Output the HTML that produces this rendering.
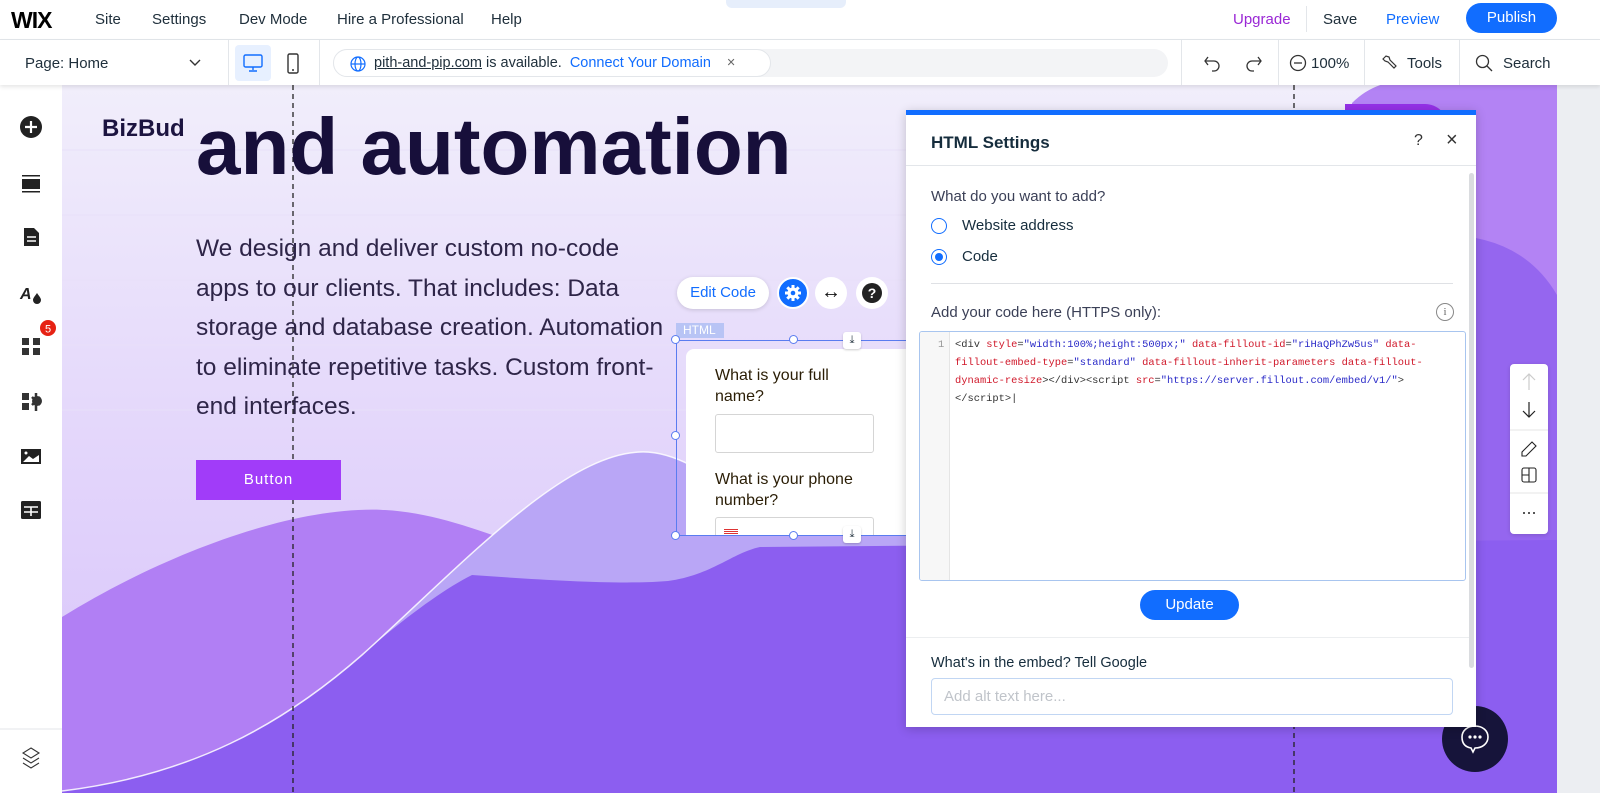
<!DOCTYPE html>
<html><head><meta charset="utf-8"><style>
*{box-sizing:border-box;margin:0;padding:0}
body{width:1600px;height:793px;overflow:hidden;font-family:"Liberation Sans",sans-serif;background:#eceef2;position:relative;color:#20303c}
.abs{position:absolute}
#top{left:0;top:0;width:1600px;height:40px;background:#fff;border-bottom:1px solid #e3e6ea}
#top span{position:absolute;top:11px;font-size:15px;color:#20303c}
#bar2{left:0;top:40px;width:1600px;height:45px;background:#fff;box-shadow:0 2px 4px rgba(0,0,0,.1);z-index:5}
#bar2 .sep{position:absolute;top:0;width:1px;height:45px;background:#e3e6ea}
#side{left:0;top:85px;width:62px;height:708px;background:#fff;z-index:4}
#canvas{left:62px;top:85px;width:1495px;height:708px;overflow:hidden;background:linear-gradient(#f1eefb,#e1d2fb 60%,#d6c2fa)}
.mono{font-family:"Liberation Mono",monospace;font-size:10.4px;line-height:18px;white-space:pre}
.r{color:#d0182a}.b{color:#2a2ac8}.k{color:#333}
</style></head><body>
<div id="top" class="abs">
 <span style="left:11px;top:7px;font-size:23px;font-weight:bold;letter-spacing:-1px;color:#000">WIX</span>
 <span style="left:95px">Site</span><span style="left:152px">Settings</span><span style="left:239px">Dev Mode</span><span style="left:337px">Hire a Professional</span><span style="left:491px">Help</span>
 <div class="abs" style="left:726px;top:0;width:120px;height:8px;background:#e6eefb;border-radius:0 0 6px 6px"></div>
 <span style="left:1233px;color:#9a27d5">Upgrade</span>
 <div class="abs" style="left:1306px;top:6px;width:1px;height:26px;background:#e3e6ea"></div>
 <span style="left:1323px">Save</span><span style="left:1386px;color:#116dff">Preview</span>
 <div class="abs" style="left:1466px;top:3px;width:91px;height:30px;border-radius:15px;background:#116dff;color:#fff;font-size:15px;text-align:center;line-height:30px">Publish</div>
</div>
<div id="bar2" class="abs">
 <div class="abs" style="left:25px;top:15px;font-size:15px">Page: Home</div>
 <svg class="abs" style="left:189px;top:19px" width="12" height="8"><path d="M1 1l5 5 5-5" stroke="#333" fill="none" stroke-width="1.4"/></svg>
 <div class="sep" style="left:228px"></div>
 <div class="abs" style="left:235px;top:5px;width:36px;height:36px;background:#e7f0ff;border-radius:4px"></div>
 <svg class="abs" style="left:242px;top:13px" width="22" height="20"><rect x="2" y="2" width="18" height="12" rx="1.5" stroke="#116dff" fill="none" stroke-width="1.4"/><path d="M11 14v3M7 18h8" stroke="#116dff" stroke-width="1.4"/></svg>
 <svg class="abs" style="left:286px;top:13px" width="14" height="22"><rect x="2" y="1" width="10" height="19" rx="1.5" stroke="#333" fill="none" stroke-width="1.4"/><circle cx="7" cy="17" r="1" fill="#333"/></svg>
 <div class="sep" style="left:319px"></div>
 <div class="abs" style="left:333px;top:9px;width:835px;height:28px;border-radius:14px;background:#f3f4f6"></div>
 <div class="abs" style="left:333px;top:9px;width:438px;height:28px;border-radius:14px;background:#fff;border:1px solid #e3e6ea;font-size:14.5px;line-height:26px;padding-left:40px;color:#20303c"><span style="text-decoration:underline">pith-and-pip.com</span> is available. <span style="color:#116dff;margin-left:4px">Connect Your Domain</span><span style="color:#666;margin-left:16px">×</span></div>
 <svg class="abs" style="left:350px;top:16px" width="16" height="16"><circle cx="8" cy="8" r="7" stroke="#116dff" fill="none" stroke-width="1.2"/><ellipse cx="8" cy="8" rx="3" ry="7" stroke="#116dff" fill="none" stroke-width="1.2"/><path d="M1 8h14" stroke="#116dff" stroke-width="1.2"/></svg>
 <div class="sep" style="left:1181px"></div>
 <svg class="abs" style="left:1203px;top:13px" width="60" height="20"><path d="M5 4L2 8l3 4M2 8h9a5 5 0 0 1 0 10H9" stroke="#333" fill="none" stroke-width="1.3"/><path d="M55 4l3 4-3 4M58 8h-9a5 5 0 0 0 0 10h2" stroke="#333" fill="none" stroke-width="1.3"/></svg>
 <div class="sep" style="left:1278px"></div>
 <svg class="abs" style="left:1289px;top:14px" width="18" height="18"><circle cx="9" cy="9" r="7.5" stroke="#333" fill="none" stroke-width="1.3"/><path d="M5 9h8" stroke="#333" stroke-width="1.3"/></svg>
 <div class="abs" style="left:1311px;top:15px;font-size:15px">100%</div>
 <div class="sep" style="left:1364px"></div>
 <svg class="abs" style="left:1380px;top:13px" width="18" height="18"><path d="M3 6l3-3 3 1 1 3 6 6-2 2-6-6-3-1z" stroke="#333" fill="none" stroke-width="1.2"/></svg>
 <div class="abs" style="left:1407px;top:15px;font-size:15px">Tools</div>
 <div class="sep" style="left:1459px"></div>
 <svg class="abs" style="left:1475px;top:14px" width="18" height="18"><circle cx="7.5" cy="7.5" r="6" stroke="#333" fill="none" stroke-width="1.3"/><path d="M12 12l5 5" stroke="#333" stroke-width="1.3"/></svg>
 <div class="abs" style="left:1503px;top:15px;font-size:15px">Search</div>
</div>
<div id="side" class="abs">
 <svg width="62" height="708" class="abs" style="left:0;top:0">
  <circle cx="31" cy="42" r="11" fill="#222"/><path d="M31 36v12M25 42h12" stroke="#fff" stroke-width="2.2"/>
  <rect x="22" y="94" width="18" height="10" fill="#222"/><rect x="22" y="90" width="18" height="1.5" fill="#222"/><rect x="22" y="106" width="18" height="1.5" fill="#222"/>
  <path d="M24 143h10l5 5v13h-15z" fill="#222"/><path d="M27 152h9M27 156h9" stroke="#fff" stroke-width="1.5"/>
  <text x="20" y="214" font-family="Liberation Sans" font-weight="bold" font-style="italic" font-size="16" fill="#222">A</text><path d="M37 208c-2 3-4 5-4 7a4 4 0 0 0 8 0c0-2-2-4-4-7z" fill="#222"/>
  <rect x="22" y="253" width="7" height="7" fill="#333"/><rect x="33" y="253" width="7" height="7" fill="#333"/><rect x="22" y="263" width="7" height="7" fill="#333"/><rect x="33" y="263" width="7" height="7" fill="#333"/>
  <circle cx="48" cy="243" r="8" fill="#e62214"/><text x="48" y="247.5" text-anchor="middle" font-family="Liberation Sans" font-size="11" fill="#fff">5</text>
  <rect x="22" y="308" width="7" height="7" fill="#333"/><rect x="22" y="318" width="7" height="7" fill="#333"/><circle cx="37" cy="316" r="5" fill="#333"/><path d="M36 308v18M32 312l8 8M40 312l-8 8" stroke="#333" stroke-width="2.5"/>
  <rect x="21" y="364" width="20" height="15" fill="#222"/><path d="M23 377l6-6 4 3 6-4v7z" fill="#fff"/><circle cx="26" cy="368" r="1.5" fill="#fff"/>
  <rect x="21" y="416" width="20" height="18" rx="1.5" fill="#222"/><path d="M24 422h14M31 422v9M24 427h14" stroke="#fff" stroke-width="1.6"/>
  <path d="M0 644h62" stroke="#e3e6ea"/>
  <path d="M31 663l8 5-8 5-8-5zM23 673l8 5 8-5M23 678l8 5 8-5" stroke="#333" fill="none" stroke-width="1.1"/>
 </svg>
</div>
<div id="canvas" class="abs">
 <svg class="abs" style="left:0;top:0" width="1495" height="708">
  <g stroke="#e8e0f8" stroke-width="1"><path d="M0 65h1495M0 130h1495M0 195h1495M0 260h1495M0 325h1495"/></g>
  <path d="M1290 18 q30-30 80-20 L1495 -5 V708 H1290 Z" fill="#b383f4"/>
  <path d="M1380 150 q80 0 115 60 V708 H1380Z" fill="#9566ef"/>
  <path d="M1283 19 h80 a23 23 0 0 1 0 46 h-80z" fill="#9530e8"/>
  <path d="M0 532 C100 470 230 420 323 425 C420 430 520 500 606 496 C660 490 700 460 760 455 L1290 440 V708 H0Z" fill="#b17ff4"/>
  <path d="M0 706 C130 690 220 640 300 570 C400 480 500 370 578 367 C620 365 660 400 720 440 L1290 440 V708Z" fill="#b9a6f6"/>
  <path d="M0 708 L0 706 C130 690 220 640 300 570 C340 535 380 505 410 490 C480 495 560 500 606 496 C650 490 670 468 698 462 L1495 455 V708Z" fill="#8c5ef0"/>
  <path d="M0 706 C130 690 220 640 300 570 C400 480 500 370 578 367 C620 365 660 400 720 440" stroke="#fff" stroke-width="1.5" fill="none" opacity=".85"/>
  <path d="M231 0v708M1232 0v708" stroke="#222" stroke-width="1.3" stroke-dasharray="5 4"/>
 </svg>
 <div class="abs" style="left:40px;top:30px;font-size:24px;font-weight:bold;color:#1c1440">BizBud</div>
 <div class="abs" style="left:134px;top:17px;font-size:80px;font-weight:bold;color:#170f3a;line-height:90px;white-space:nowrap">and automation</div>
 <div class="abs" style="left:134px;top:144px;font-size:24.5px;line-height:39.5px;color:#2e2548;white-space:nowrap">We design and deliver custom no-code<br>apps to our clients. That includes: Data<br>storage and database creation. Automation<br>to eliminate repetitive tasks. Custom front-<br>end interfaces.</div>
 <div class="abs" style="left:134px;top:375px;width:145px;height:40px;background:#a13cf9;color:#fff;font-size:15px;text-align:center;line-height:40px;letter-spacing:1px">Button</div>
 <div class="abs" style="left:615px;top:192px;width:92px;height:32px;background:#fff;border-radius:16px;color:#116dff;font-size:15px;text-align:center;line-height:32px;box-shadow:0 1px 4px rgba(0,0,0,.15)">Edit Code</div>
 <div class="abs" style="left:715px;top:192px;width:32px;height:32px;border-radius:50%;background:#116dff;border:2px solid #fff"></div>
 <svg class="abs" style="left:722px;top:199px" width="18" height="18"><circle cx="9" cy="9" r="5.5" fill="#fff"/><path d="M9 1v16M1 9h16M3.3 3.3l11.4 11.4M14.7 3.3L3.3 14.7" stroke="#fff" stroke-width="3"/><circle cx="9" cy="9" r="2.3" fill="#116dff"/></svg>
 <div class="abs" style="left:753px;top:192px;width:32px;height:32px;border-radius:50%;background:#fff;font-size:20px;text-align:center;line-height:30px;color:#111">↔</div>
 <div class="abs" style="left:794px;top:192px;width:32px;height:32px;border-radius:50%;background:#fff"></div>
 <div class="abs" style="left:800px;top:198px;width:20px;height:20px;border-radius:50%;background:#222;color:#fff;font-weight:bold;font-size:14px;text-align:center;line-height:20px">?</div>
 <div class="abs" style="left:614px;top:238px;width:48px;height:15px;background:#b8c4f5;color:#fff;font-size:12px;padding-left:7px;line-height:15px">HTML</div>
 <div class="abs" style="left:624px;top:264px;width:220px;height:186px;background:#fff;border-radius:8px 0 0 0"></div>
 <div class="abs" style="left:653px;top:280px;font-size:16px;line-height:21px;color:#2a1d05;width:140px">What is your full name?</div>
 <div class="abs" style="left:653px;top:329px;width:159px;height:39px;border:1px solid #d5d5d5;border-radius:3px"></div>
 <div class="abs" style="left:653px;top:384px;font-size:16px;line-height:21px;color:#2a1d05;width:160px">What is your phone number?</div>
 <div class="abs" style="left:653px;top:432px;width:159px;height:18px;border:1px solid #d5d5d5;border-bottom:none;border-radius:3px 3px 0 0"></div>
 <div class="abs" style="left:662px;top:444px;width:14px;height:6px;background:repeating-linear-gradient(#d33 0 1px,#fff 1px 2px)"></div>
 <div class="abs" style="left:614px;top:255px;width:230px;height:196px;border:1px solid #5a7cf0;border-right:none"></div>
 <div class="abs" style="left:609px;top:346px;width:9px;height:9px;border-radius:50%;background:#fff;border:1px solid #5a7cf0"></div>
 <div class="abs" style="left:609px;top:250px;width:9px;height:9px;border-radius:50%;background:#fff;border:1px solid #5a7cf0"></div>
 <div class="abs" style="left:609px;top:446px;width:9px;height:9px;border-radius:50%;background:#fff;border:1px solid #5a7cf0"></div>
 <div class="abs" style="left:727px;top:250px;width:9px;height:9px;border-radius:50%;background:#fff;border:1px solid #5a7cf0"></div>
 <div class="abs" style="left:727px;top:446px;width:9px;height:9px;border-radius:50%;background:#fff;border:1px solid #5a7cf0"></div>
 <div class="abs" style="left:781px;top:247px;width:18px;height:17px;background:#fff;border-radius:3px;font-size:11px;text-align:center;line-height:16px;box-shadow:0 1px 2px rgba(0,0,0,.2)">⤓</div>
 <div class="abs" style="left:781px;top:441px;width:18px;height:17px;background:#fff;border-radius:3px;font-size:11px;text-align:center;line-height:16px;box-shadow:0 1px 2px rgba(0,0,0,.2)">⤓</div>
 <div class="abs" style="left:1448px;top:279px;width:38px;height:170px;background:#fff;border-radius:4px;box-shadow:0 1px 4px rgba(0,0,0,.15)">
  <svg width="38" height="170"><path d="M19 10v16M13 16l6-6 6 6" stroke="#ccc" fill="none" stroke-width="1.2"/><path d="M19 38v15M13 47l6 6 6-6" stroke="#222" fill="none" stroke-width="1.2"/><path d="M0 66h38M0 129h38" stroke="#e5e5e5"/><path d="M12 88l10-10 4 4-10 10h-4z" stroke="#222" fill="none" stroke-width="1.1"/><rect x="12" y="104" width="14" height="14" rx="2" stroke="#222" fill="none" stroke-width="1.1"/><path d="M19 104v14M12 111h7" stroke="#222" stroke-width="1.1"/><circle cx="14" cy="149" r="1" fill="#222"/><circle cx="19" cy="149" r="1" fill="#222"/><circle cx="24" cy="149" r="1" fill="#222"/></svg>
 </div>
 <div class="abs" style="left:1380px;top:621px;width:66px;height:66px;border-radius:50%;background:#16143a"></div>
 <svg class="abs" style="left:1396px;top:637px" width="34" height="34"><path d="M17 4c8 0 13 5 13 11s-5 11-13 11l-2 4-2-4C7 25 4 21 4 15 4 9 9 4 17 4z" stroke="#fff" fill="none" stroke-width="1.6"/><circle cx="12" cy="15" r="1.6" fill="#fff"/><circle cx="17" cy="15" r="1.6" fill="#fff"/><circle cx="22" cy="15" r="1.6" fill="#fff"/></svg>
</div>
<div class="abs" style="left:906px;top:110px;width:570px;height:617px;background:#fff;border-top:5px solid #116dff;box-shadow:0 2px 10px rgba(0,0,0,.2);z-index:6">
 <div class="abs" style="left:25px;top:18px;font-size:17px;font-weight:bold;color:#162d3d">HTML Settings</div>
 <div class="abs" style="left:508px;top:17px;font-size:16px;color:#333">?</div>
 <div class="abs" style="left:540px;top:14px;font-size:20px;color:#333">×</div>
 <div class="abs" style="left:0;top:50px;width:570px;height:1px;background:#e3e6ea"></div>
 <div class="abs" style="left:563px;top:58px;width:5px;height:495px;background:#dadcdf;border-radius:3px"></div>
 <div class="abs" style="left:25px;top:73px;font-size:15px;color:#3b4057">What do you want to add?</div>
 <div class="abs" style="left:25px;top:103px;width:16px;height:16px;border-radius:50%;border:1px solid #116dff"></div>
 <div class="abs" style="left:56px;top:102px;font-size:15px;color:#162d3d">Website address</div>
 <div class="abs" style="left:25px;top:134px;width:16px;height:16px;border-radius:50%;border:1px solid #116dff;padding:3px"><div style="width:8px;height:8px;border-radius:50%;background:#116dff"></div></div>
 <div class="abs" style="left:56px;top:133px;font-size:15px;color:#162d3d">Code</div>
 <div class="abs" style="left:25px;top:168px;width:522px;height:1px;background:#dfe1e5"></div>
 <div class="abs" style="left:25px;top:189px;font-size:15px;color:#3b4057">Add your code here (HTTPS only):</div>
 <div class="abs" style="left:530px;top:188px;width:18px;height:18px;border-radius:50%;border:1px solid #888;font-size:11px;text-align:center;line-height:16px;color:#666;font-family:'Liberation Serif',serif">i</div>
 <div class="abs" style="left:13px;top:216px;width:547px;height:250px;border:1px solid #a8c5ef;border-radius:3px;overflow:hidden">
  <div class="abs" style="left:0;top:0;width:30px;height:250px;background:#f7f7f7;border-right:1px solid #e5e5e5"></div>
  <div class="abs mono" style="left:18px;top:4px;color:#999">1</div>
  <div class="abs mono k" style="left:35px;top:4px">&lt;div <span class="r">style</span>=<span class="b">"width:100%;height:500px;"</span> <span class="r">data-fillout-id</span>=<span class="b">"riHaQPhZw5us"</span> <span class="r">data-</span>
<span class="r">fillout-embed-type</span>=<span class="b">"standard"</span> <span class="r">data-fillout-inherit-parameters data-fillout-</span>
<span class="r">dynamic-resize</span>&gt;&lt;/div&gt;&lt;script <span class="r">src</span>=<span class="b">"https://server.fillout.com/embed/v1/"</span>&gt;
&lt;/script&gt;|</div>
 </div>
 <div class="abs" style="left:234px;top:475px;width:99px;height:30px;border-radius:15px;background:#116dff;color:#fff;font-size:15px;text-align:center;line-height:30px">Update</div>
 <div class="abs" style="left:0;top:522px;width:563px;height:1px;background:#eceef0"></div>
 <div class="abs" style="left:25px;top:540px;font-size:14.5px;color:#162d3d">What's in the embed? Tell Google</div>
 <div class="abs" style="left:25px;top:563px;width:522px;height:37px;border:1px solid #c1d6f3;border-radius:4px;font-size:15px;color:#c0c4ca;padding:9px 12px">Add alt text here...</div>
</div>
</body></html>
